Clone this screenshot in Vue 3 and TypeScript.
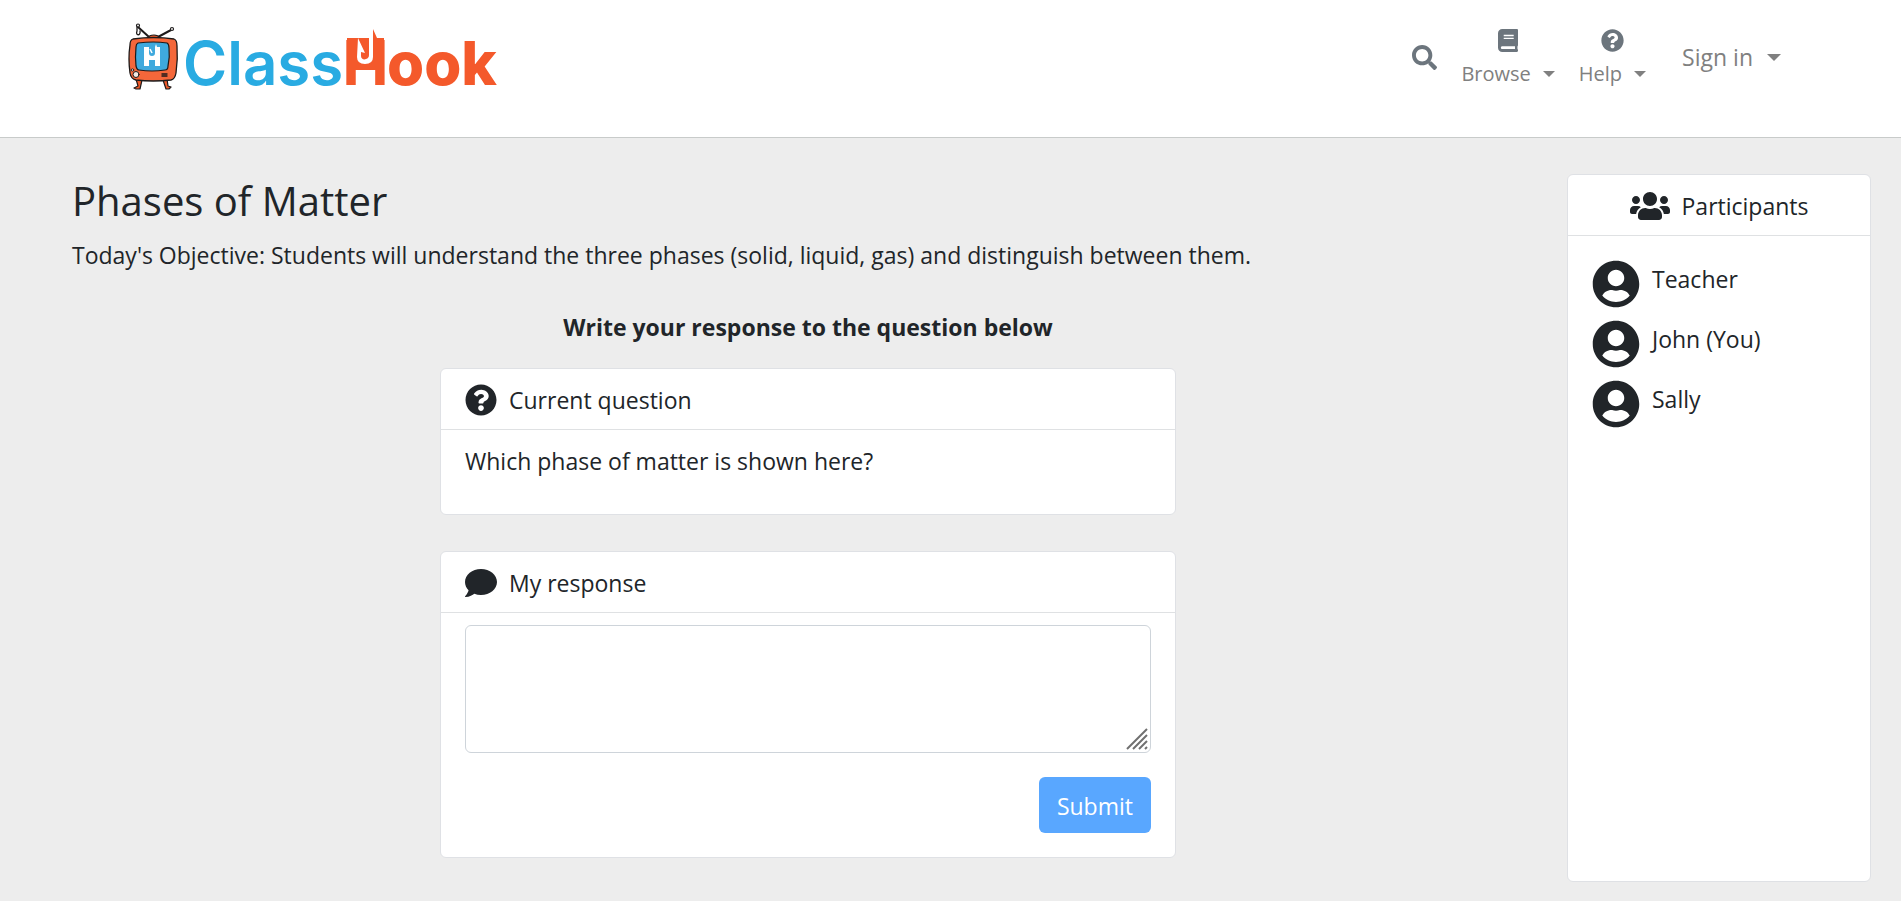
<script setup lang="ts">
import { ref } from 'vue'

interface Participant {
  id: number
  name: string
}

const participants: Participant[] = [
  { id: 1, name: 'Teacher' },
  { id: 2, name: 'John (You)' },
  { id: 3, name: 'Sally' },
]

const response = ref('')

const questionCircle =
  'M504 256c0 136.997-111.043 248-248 248S8 392.997 8 256C8 119.083 119.043 8 256 8s248 111.083 248 248zM262.655 90c-54.497 0-89.255 22.957-116.549 63.758-3.536 5.286-2.353 12.415 2.715 16.258l34.699 26.31c5.205 3.947 12.621 3.008 16.665-2.122 17.864-22.658 30.113-35.797 57.303-35.797 20.429 0 45.698 13.148 45.698 32.958 0 14.976-12.363 22.667-32.534 33.976C247.128 238.528 216 254.941 216 296v4c0 6.627 5.373 12 12 12h56c6.627 0 12-5.373 12-12v-1.333c0-28.462 83.186-29.647 83.186-106.667 0-58.002-60.165-102-116.531-102zM256 338c-25.365 0-46 20.635-46 46 0 25.364 20.635 46 46 46s46-20.636 46-46c0-25.365-20.635-46-46-46z'
</script>

<template>
  <div class="page">
    <header class="topbar">
      <a class="brand" href="#" aria-label="ClassHook">
        <svg class="logo" viewBox="0 0 376 72" width="376" height="72">
          <!-- television -->
          <g stroke="#1d1a1a" stroke-linecap="round" stroke-linejoin="round">
            <path d="M14 7 L25 17 M47 10 L34 17" fill="none" stroke-width="2" />
            <circle cx="14" cy="5.500" r="1.500" fill="#fff" stroke-width="1.200" />
            <circle cx="48" cy="9" r="1.500" fill="#fff" stroke-width="1.200" />
            <path d="M13 7 V11 C11 16 17 16 16 11" fill="none" stroke-width="1.300" />
            <path d="M12 59 L14 66 L10 68 L12 69 H16 L18 60 M39 60 L42 69 H45 L47 67 L44 66 L43 59" fill="#f15a29" stroke-width="1.200" />
            <path d="M24 18 Q25 15 30 15 Q34 15 36 18 Z" fill="#f15a29" stroke-width="1.200" />
            <path d="M9 19 Q30 16 50 19 Q53 20 53 26 Q54 39 52 53 Q51 59 47 60 Q29 62 12 60 Q7 59 6 53 Q4 38 6 25 Q6 20 9 19 Z" fill="#f4673a" stroke-width="1.300" />
            <path d="M14 23 Q30 21 43 23 Q45 24 45 28 Q46 37 44 46 Q44 50 41 50 Q28 52 15 50 Q13 50 12 46 Q11 37 12 27 Q12 24 14 23 Z" fill="#3fa9dd" stroke-width="1.200" />
            <circle cx="12" cy="54.500" r="3" fill="#f3e9e4" stroke-width="1" />
            <circle cx="8.500" cy="50" r="1.200" fill="#f3e9e4" stroke-width="0.900" />
            <path d="M38 54 H43 M38 56 H43" fill="none" stroke-width="1.400" />
          </g>
          <path d="M20 27 H25 V33 Q25 36 28 36 Q31 36 31 33 V27 L32 24 L33 27 H36 V46 H31 V40 H25 V46 H20 Z" fill="#fff" />
          <path d="M26 29 L28 33" stroke="#fff" stroke-width="1.500" />
          <!-- wordmark -->
          <text class="word word-blue" x="59" y="65">Class</text>
          <text class="word-h" x="218" y="65">H</text>
          <path d="M223 18 H249 V9 L253 18 H260 V50 H223 Z" fill="#f4592b" />
          <path d="M234 18 L241 33 L237 32 V36 C237 39 240 40 242 39 Q245 38 245 35 V18 H249 V37 Q249 44 241 44 Q233 44 233 37 Z" fill="#fff" />
          <text class="word word-orange" x="263" y="65">ook</text>
        </svg>
      </a>

      <nav class="nav" aria-label="Main">
        <button class="nav-search" type="button" aria-label="Search">
          <svg viewBox="0 0 512 512" width="25" height="25">
            <path d="M505 442.7L405.3 343c-4.5-4.5-10.6-7-17-7H372c27.6-35.3 44-79.7 44-128C416 93.1 322.9 0 208 0S0 93.1 0 208s93.1 208 208 208c48.3 0 92.7-16.4 128-44v16.3c0 6.4 2.5 12.5 7 17l99.7 99.7c9.4 9.4 24.6 9.4 33.9 0l28.3-28.3c9.4-9.4 9.4-24.6.1-34zM208 336c-70.7 0-128-57.2-128-128 0-70.7 57.2-128 128-128 70.7 0 128 57.2 128 128 0 70.7-57.2 128-128 128z" />
          </svg>
        </button>
        <button class="nav-item" type="button" aria-haspopup="true">
          <svg viewBox="0 0 448 512" width="20" height="23">
            <path d="M448 360V24c0-13.3-10.7-24-24-24H96C43 0 0 43 0 96v320c0 53 43 96 96 96h328c13.3 0 24-10.7 24-24v-16c0-7.5-3.5-14.3-8.9-18.7-4.2-15.4-4.2-59.3 0-74.7 5.4-4.3 8.9-11.1 8.9-18.6zM128 134c0-3.3 2.7-6 6-6h212c3.3 0 6 2.7 6 6v20c0 3.3-2.7 6-6 6H134c-3.3 0-6-2.7-6-6v-20zm0 64c0-3.3 2.7-6 6-6h212c3.3 0 6 2.7 6 6v20c0 3.3-2.7 6-6 6H134c-3.3 0-6-2.7-6-6v-20zm253.400 250H96c-17.700 0-32-14.300-32-32 0-17.600 14.400-32 32-32h285.400c-1.900 17.100-1.900 46.900 0 64z" />
          </svg>
          <span class="nav-label">Browse<i class="caret"></i></span>
        </button>
        <button class="nav-item" type="button" aria-haspopup="true">
          <svg viewBox="0 0 512 512" width="23" height="23"><path :d="questionCircle" /></svg>
          <span class="nav-label">Help<i class="caret"></i></span>
        </button>
        <button class="nav-signin" type="button" aria-haspopup="true">Sign in<i class="caret caret-lg"></i></button>
      </nav>
    </header>

    <div class="content">
      <main class="lesson">
        <h1>Phases of Matter</h1>
        <p class="objective">
          Today's Objective: Students will understand the three phases (solid, liquid, gas) and distinguish between them.
        </p>

        <div class="activity">
          <h2>Write your response to the question below</h2>

          <section class="card">
            <h3 class="card-header">
              <svg viewBox="0 0 512 512" width="32" height="32"><path :d="questionCircle" /></svg>
              Current question
            </h3>
            <p class="question">Which phase of matter is shown here?</p>
          </section>

          <form class="card" @submit.prevent>
            <div class="card-header">
              <svg viewBox="0 0 512 512" width="32" height="32">
                <path d="M256 32C114.6 32 0 125.1 0 240c0 49.6 21.4 95 57 130.7C44.5 421.1 2.7 466 2.2 466.5c-2.2 2.3-2.8 5.7-1.5 8.7S4.8 480 8 480c66.3 0 116-31.8 140.6-51.4 32.7 12.3 69 19.4 107.4 19.4 141.4 0 256-93.1 256-208S397.4 32 256 32z" />
              </svg>
              <label for="response">My response</label>
            </div>
            <div class="response">
              <div class="field">
                <textarea id="response" v-model="response"></textarea>
                <svg class="grip" viewBox="0 0 22 22" width="22" height="22" aria-hidden="true">
                  <path d="M1 21 L21 1 M7 21 L21 7 M13 21 L21 13 M19 21 L21 19" />
                </svg>
              </div>
              <button class="submit" type="submit">Submit</button>
            </div>
          </form>
        </div>
      </main>

      <aside class="card participants">
        <h3 class="card-header">
          <svg viewBox="0 0 640 512" width="40" height="32">
            <path d="M96 224c35.3 0 64-28.7 64-64s-28.7-64-64-64-64 28.7-64 64 28.7 64 64 64zm448 0c35.3 0 64-28.7 64-64s-28.7-64-64-64-64 28.7-64 64 28.7 64 64 64zm32 32h-64c-17.6 0-33.5 7.1-45.1 18.6 40.3 22.1 68.9 62 75.1 109.4h66c17.7 0 32-14.3 32-32v-32c0-35.3-28.7-64-64-64zm-256 0c61.9 0 112-50.1 112-112S381.9 32 320 32 208 82.1 208 144s50.1 112 112 112zm76.8 32h-8.3c-20.8 10-43.9 16-68.5 16s-47.600-6-68.500-16h-8.300C179.600 288 128 339.600 128 403.200V432c0 26.500 21.500 48 48 48h288c26.500 0 48-21.500 48-48v-28.800c0-63.600-51.600-115.200-115.200-115.200zm-223.700-13.400C161.500 263.100 145.600 256 128 256H64c-35.300 0-64 28.700-64 64v32c0 17.700 14.300 32 32 32h65.900c6.300-47.400 34.900-87.300 75.200-109.400z" />
          </svg>
          Participants
        </h3>
        <ul>
          <li v-for="person in participants" :key="person.id">
            <svg viewBox="0 0 496 512" width="48" height="48">
              <path d="M248 8C111 8 0 119 0 256s111 248 248 248 248-111 248-248S385 8 248 8zm0 96c48.6 0 88 39.4 88 88s-39.4 88-88 88-88-39.4-88-88 39.4-88 88-88zm0 344c-58.7 0-111.3-26.6-146.5-68.2 18.8-35.4 55.6-59.8 98.5-59.8 2.4 0 4.8.4 7.1 1.1 13 4.2 26.6 6.9 40.9 6.9 14.3 0 28-2.7 40.9-6.9 2.3-.7 4.7-1.1 7.1-1.1 42.9 0 79.7 24.4 98.5 59.8C359.3 421.4 306.7 448 248 448z" />
            </svg>
            <span>{{ person.name }}</span>
          </li>
        </ul>
      </aside>
    </div>
  </div>
</template>

<style>
body {
  margin: 0;
  background: #ededed;
}
</style>

<style scoped>
.page {
  display: flex;
  flex-direction: column;
  box-sizing: border-box;
  min-height: 100vh;
  font-family: 'Open Sans', 'Noto Sans', sans-serif;
  font-size: 23px;
  line-height: 36px;
  color: #212529;
}

.page *,
.page *::before {
  box-sizing: border-box;
}

svg {
  flex: none;
  fill: currentColor;
}

button {
  font: inherit;
  border: 0;
  background: none;
  padding: 0;
  cursor: pointer;
}

.topbar {
  display: flex;
  justify-content: space-between;
  align-items: flex-start;
  height: 138px;
  padding: 20px 120px 0 124px;
  background: #fff;
  border-bottom: 1px solid #c8cbca;
}

.brand,
.logo {
  display: block;
}

.logo {
  overflow: visible;
}

.word {
  font-family: Inter, sans-serif;
  font-size: 60px;
}

.word-blue {
  fill: #29abe2;
  font-weight: 600;
}

.word-orange {
  fill: #f4592b;
  font-weight: 800;
}

.word-h {
  fill: #f4592b;
  font-family: 'Liberation Sans', Arial, sans-serif;
  font-weight: 700;
  font-size: 65px;
}

.nav {
  display: flex;
  align-items: center;
  height: 74px;
  color: #6c757d;
}

.nav-search {
  display: flex;
  margin-right: 24px;
  color: inherit;
}

.nav-item {
  display: flex;
  flex-direction: column;
  align-items: center;
  gap: 4px;
  padding-top: 7px;
  margin-right: 24px;
  font-size: 20px;
  color: inherit;
}

.nav-label,
.nav-signin {
  display: flex;
  align-items: center;
  color: #808080;
}

.nav-signin {
  margin-left: 12px;
}

.caret {
  margin-left: 12px;
  border: 6px solid transparent;
  border-top-color: currentColor;
  border-bottom: 0;
}

.caret-lg {
  margin-left: 14px;
  border-width: 7px;
  border-bottom: 0;
}

.content {
  flex: 1;
  display: grid;
  grid-template-columns: minmax(0, 1fr) 304px;
  column-gap: 23px;
  padding: 36px 30px 19px 72px;
}

h1,
h2,
h3,
p,
ul {
  margin: 0;
  padding: 0;
}

h1 {
  font-size: 40px;
  font-weight: 400;
  line-height: 54px;
}

.objective {
  margin-top: 9px;
}

.activity {
  width: 50%;
  margin: 36px auto 0;
}

h2 {
  margin-bottom: 23px;
  font-size: 23px;
  font-weight: 700;
  line-height: 36px;
  text-align: center;
}

.card {
  background: #fff;
  border: 1px solid #dfe1e5;
  border-radius: 6px;
}

.card + .card {
  margin-top: 36px;
}

.card-header {
  display: flex;
  align-items: center;
  gap: 12px;
  height: 61px;
  padding: 2px 24px 0;
  border-bottom: 1px solid #dfe1e3;
  font-size: 23px;
  font-weight: 400;
}

.question {
  padding: 13px 24px 35px;
}

.response {
  display: flex;
  flex-direction: column;
  align-items: flex-end;
  padding: 12px 24px 24px;
}

.field {
  position: relative;
  display: flex;
  width: 100%;
}

textarea {
  width: 100%;
  height: 128px;
  padding: 9px 18px;
  border: 1px solid #ced4da;
  border-radius: 6px;
  background: #fff;
  font: inherit;
  color: inherit;
  resize: none;
}

.grip {
  position: absolute;
  right: 3px;
  bottom: 3px;
  fill: none;
  stroke: #707070;
  stroke-width: 2;
  pointer-events: none;
}

.submit {
  height: 56px;
  margin-top: 24px;
  padding: 2px 18px 0;
  border-radius: 6px;
  background: #59a7ff;
  color: #fff;
}

.participants .card-header {
  justify-content: center;
}

ul {
  display: grid;
  align-content: start;
  gap: 12px;
  padding: 24px;
  list-style: none;
}

li {
  display: flex;
  gap: 12px;
  line-height: 38px;
}
</style>
